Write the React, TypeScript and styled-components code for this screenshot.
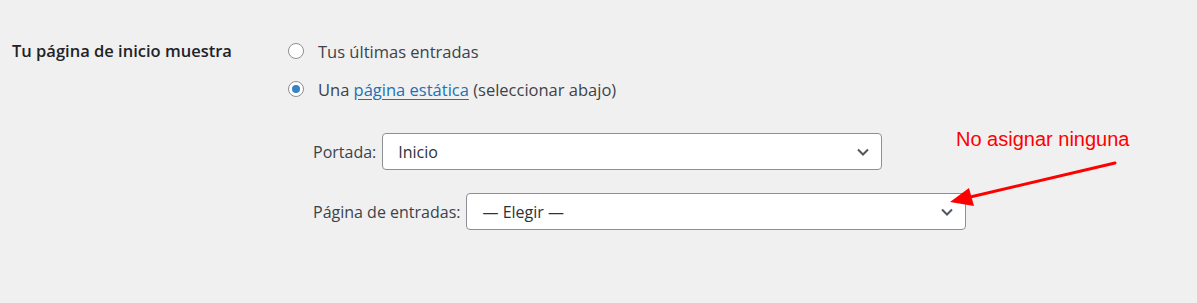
import React, { useState } from 'react';
import styled, { createGlobalStyle } from 'styled-components';

const GlobalStyle = createGlobalStyle`
  html, body {
    margin: 0;
    padding: 0;
    background: #f0f0f1;
  }
  body {
    font-family: "Open Sans", "Noto Sans", sans-serif;
    font-size: 16px;
    color: #3c434a;
  }
`;

const Page = styled.div`
  position: relative;
  width: 1197px;
  height: 303px;
  overflow: hidden;
  box-sizing: border-box;
  padding: 32px 0 0 12px;
`;

const FormRow = styled.div`
  display: grid;
  grid-template-columns: 276px 1fr;
`;

const RowLabel = styled.div`
  font-weight: 600;
  font-size: 16.5px;
  color: #1d2327;
  line-height: 37px;
`;

const Field = styled.fieldset`
  border: none;
  margin: 0;
  padding: 0;
`;

const Choice = styled.label`
  display: flex;
  align-items: center;
  height: 38px;
  gap: 14px;
  font-size: 16.5px;
  cursor: pointer;
`;

const Radio = styled.span<{ checked: boolean }>`
  width: 16px;
  height: 16px;
  box-sizing: border-box;
  border-radius: 50%;
  border: 1px solid #8c8f94;
  background: #fff;
  display: flex;
  align-items: center;
  justify-content: center;
  &::after {
    content: '';
    width: 8px;
    height: 8px;
    border-radius: 50%;
    background: #3582c4;
    display: ${({ checked }) => (checked ? 'block' : 'none')};
  }
`;

const Link = styled.a`
  color: #2271b1;
  text-decoration: underline;
  text-underline-offset: 3px;
`;

const SubFields = styled.div`
  margin-top: 25px;
  margin-left: 25px;
  display: flex;
  flex-direction: column;
  gap: 23px;
`;

const SelectRow = styled.div`
  display: flex;
  align-items: center;
  gap: 6px;
`;

const SelectBox = styled.div`
  position: relative;
  width: 500px;
  height: 37px;
  box-sizing: border-box;
  border: 1px solid #8c8f94;
  border-radius: 4px;
  background: #fff;
  color: #2c3338;
  display: flex;
  align-items: center;
  justify-content: space-between;
  padding: 0 12px 0 15px;
`;

const Chevron = () => (
  <svg width="12" height="8" viewBox="0 0 12 8">
    <polyline points="1,1.5 6,6.5 11,1.5" fill="none" stroke="#50575e" strokeWidth="2" />
  </svg>
);

const Note = styled.div`
  position: absolute;
  left: 956px;
  top: 128px;
  font-family: "Liberation Sans", Arial, sans-serif;
  font-size: 20px;
  color: #ff0000;
`;

const ArrowLayer = styled.svg`
  position: absolute;
  left: 0;
  top: 0;
  pointer-events: none;
`;

export default function App() {
  const [mode, setMode] = useState('page');
  return (
    <Page>
      <GlobalStyle />
      <FormRow>
        <RowLabel>Tu página de inicio muestra</RowLabel>
        <Field>
          <Choice onClick={() => setMode('posts')}>
            <Radio checked={mode === 'posts'} />
            <span>Tus últimas entradas</span>
          </Choice>
          <Choice onClick={() => setMode('page')}>
            <Radio checked={mode === 'page'} />
            <span>
              Una <Link href="#">página estática</Link> (seleccionar abajo)
            </span>
          </Choice>
          <SubFields>
            <SelectRow>
              <span>Portada:</span>
              <SelectBox>
                <span>Inicio</span>
                <Chevron />
              </SelectBox>
            </SelectRow>
            <SelectRow>
              <span>Página de entradas:</span>
              <SelectBox>
                <span>— Elegir —</span>
                <Chevron />
              </SelectBox>
            </SelectRow>
          </SubFields>
        </Field>
      </FormRow>
      <Note>No asignar ninguna</Note>
      <ArrowLayer width="1197" height="303" viewBox="0 0 1197 303">
        <line x1="1115" y1="163" x2="966" y2="198" stroke="#ff0000" strokeWidth="3" strokeLinecap="round" />
        <polygon points="950,202 969,188 974,206" fill="#ff0000" />
      </ArrowLayer>
    </Page>
  );
}
